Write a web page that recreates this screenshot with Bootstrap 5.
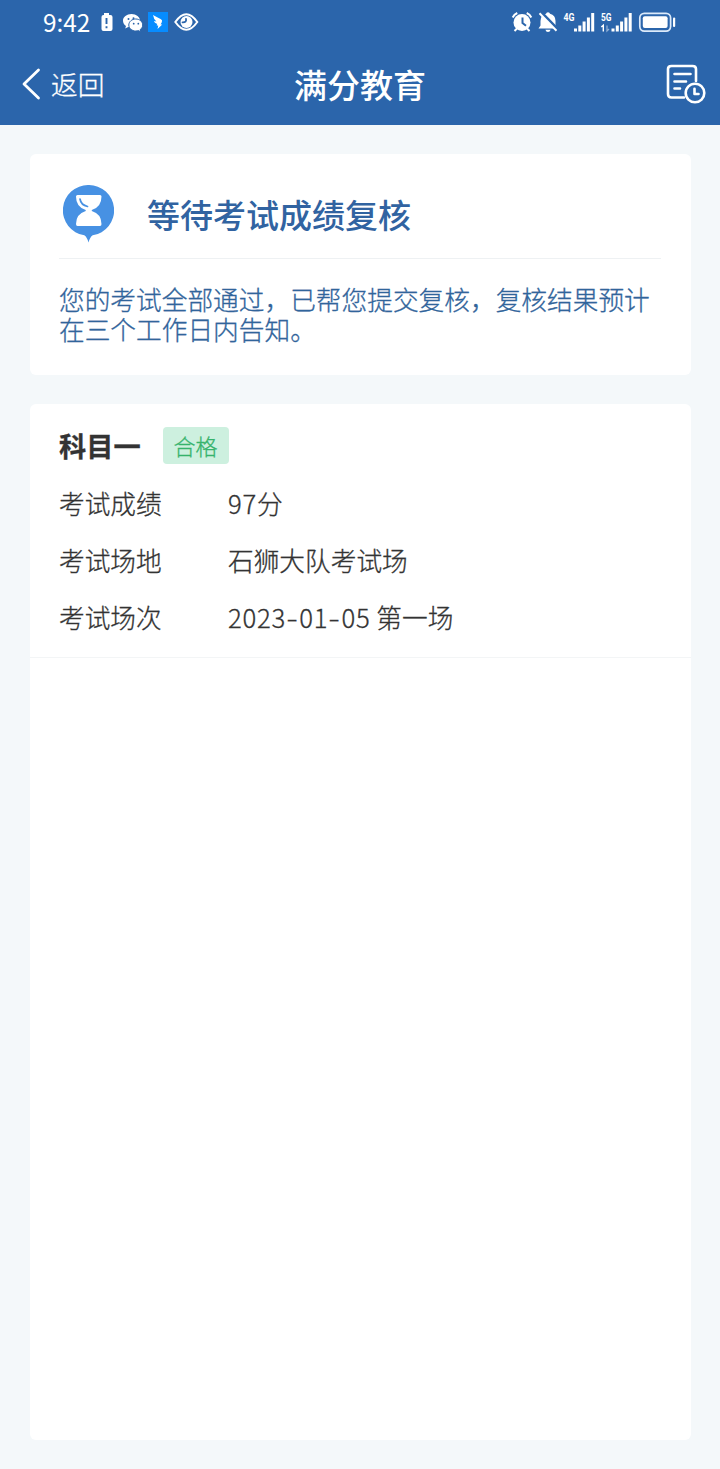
<!DOCTYPE html>
<html lang="zh-CN">
<head>
<meta charset="utf-8">
<meta name="viewport" content="width=device-width, initial-scale=1">
<title>满分教育</title>
<link href="https://cdn.jsdelivr.net/npm/bootstrap@5.3.0/dist/css/bootstrap.min.css" rel="stylesheet">
<style>
body{font-family:"Noto Sans CJK SC",sans-serif;background:#f4f8fa;color:#333;min-height:1469px;font-size:25.7px;line-height:30px;font-weight:300}
.top-area{background:#2b65ab;height:125px;color:#fff}
.status-row{height:44px;padding-left:43px;padding-right:44px}
.clock{font-size:24.4px;font-weight:400;width:55px;white-space:nowrap;line-height:28px;padding-bottom:1px}
.net-label{font:700 10px/10px "Roboto",sans-serif}
.title-row{height:80px;padding:0 14px 0 21px}
.title-row>*{flex:1 1 0}
.back-link{font-size:26.7px;gap:10px}
.page-title{font-size:33px;line-height:40px;font-weight:500;position:relative;left:-3.5px}
.thin-text{-webkit-text-stroke:.3px currentColor}
.panel{border:0;border-radius:6px;background:#fff}
main{padding:29px 29.5px;gap:29px}
.notice-panel{height:221px;padding:0 29.5px}
.notice-head{height:105px;border-bottom:1px solid #eef1f3;padding:16px 0 0 4px;gap:33px}
.notice-title{font-size:33px;line-height:40px;font-weight:500;color:#3163a1;padding-bottom:1px}
.notice-text{color:#31649b;padding-top:24.500px;white-space:nowrap}
.result-panel{height:1036px}
.subject{height:254px;padding:23px 29.5px 0;border-bottom:1px solid #f3f5f6}
.subject-head{margin-bottom:24px}
.subject-name{font-size:27.2px;font-weight:700}
.pass-tag{background:#cdf0df;color:#36b36c;font-size:22px;font-weight:300;border-radius:4px;width:66px;height:37px;padding:0 0 2px;margin-left:22px}
.info-row{height:57px}
.info-key{width:169px}
.num{letter-spacing:.75px}
.dash{display:inline-block;transform:scaleX(1.3);padding:0 2px}
</style>
</head>
<body>
<header class="top-area">
<div class="status-row d-flex align-items-center justify-content-between">
  <div class="d-flex align-items-center">
    <span class="clock">9:42</span>
    <svg width="102" height="30" viewBox="98 7 102 30" fill="#fff">
      <path d="M104 13h5v2h1.500q2 0 2 2v12q0 2-2 2h-7q-2 0-2-2v-12q0-2 2-2h.5z"/>
      <path d="M106.500 18v6M106.500 26.200v2" stroke="#2b65ab" stroke-width="1.900"/>
      <path d="M131.500 14c-4.800 0-8.500 3-8.500 6.700 0 2.200 1.200 4 3 5.200l-.8 2.600 3-1.500c1 .3 2 .4 3.200.4 4.900 0 8.600-3 8.600-6.700S136.300 14 131.500 14z"/>
      <path d="M135.800 19c-3.900 0-7 2.700-7 6s3.100 6 7 6c1 0 1.800-.1 2.600-.4l2.500 1.200-.7-2.200c1.500-1.100 2.500-2.700 2.500-4.600 0-3.300-3.100-6-6.900-6z" stroke="#2b65ab" stroke-width="1"/>
      <g fill="#2b65ab"><circle cx="128.500" cy="19" r="1"/><circle cx="133.500" cy="18.300" r="1"/><circle cx="133.700" cy="23.700" r=".9"/><circle cx="138.300" cy="23.700" r=".9"/></g>
      <path fill="#078cff" d="M148 12h20v20h-20z"/>
      <path d="M153 15q4 2.200 8 4.300 1.700 1 .8 3l-1.200 2.200h1.700l-4.800 4.500.8-3.300-1.700-.4.700-1.200q-3-.9-3.400-3.100l2.500.5q-2.600-2-3.400-6.500z"/>
      <path d="M175.300 22q11-15.500 22 0-11 15.500-22 0z" fill="none" stroke="#fff" stroke-width="2"/>
      <circle cx="186.500" cy="22" r="6"/><path d="M186 19q.8 3.500-3.500 3.300" fill="none" stroke="#2b65ab" stroke-width="1.800" stroke-linecap="round"/>
    </svg>
  </div>
  <svg width="166" height="30" viewBox="510 7 166 30" fill="#fff">
    <circle cx="522" cy="22.500" r="8.500"/>
    <path d="M512.700 17.500q1.400-3.200 4.600-4.500M531.300 17.500q-1.400-3.200-4.600-4.500M517 28.500l-2.500 2.500M527 28.500l2.500 2.500" fill="none" stroke="#fff" stroke-width="2"/>
    <path d="M522.500 17.500v5.500l3.500 2.700" fill="none" stroke="#2b65ab" stroke-width="2"/>
    <path d="M546 13.800q.3-1.600 2-1.600t2 1.600q5.500 1.400 5.500 7.200v4.500l2 3h-19l2-3v-4.500q0-5.800 5.500-7.200zM545.400 29.700h5.200q-.6 2.300-2.600 2.300t-2.600-2.300z"/>
    <path d="M541 12.500l17 17.500" stroke="#2b65ab" stroke-width="3.500"/><path d="M539.500 13.300l17 17.500" stroke="#fff" stroke-width="2"/>
    <text class="net-label" x="563.500" y="20.500" textLength="11" lengthAdjust="spacingAndGlyphs">4G</text>
    <path id="bars" d="M574 28.500h3v3h-3zM578.300 25.500h3v6h-3zM582.600 21.500h3v10h-3zM586.900 17.500h3v14h-3zM591.200 13h3v18.500h-3z"/>
    <text class="net-label" x="601" y="20.500" textLength="10.500" lengthAdjust="spacingAndGlyphs">5G</text>
    <path d="M601.300 27l2-1.800v6.300" fill="none" stroke="#fff" stroke-width="1.400"/><path d="M607 25.500v5.500l2-2" fill="none" stroke="#91b0d5" stroke-width="1.300"/>
    <use href="#bars" x="37.500"/>
    <rect x="639.800" y="13.300" width="30.800" height="17.800" rx="4.500" fill="none" stroke="#dceafa" stroke-width="1.700"/>
    <rect x="642.800" y="16.300" width="24.800" height="11.800" rx="2"/>
    <rect x="673" y="17.500" width="2.200" height="9.500" rx="1"/>
  </svg>
</div>
<nav class="title-row d-flex align-items-center">
  <a class="back-link thin-text d-flex align-items-center text-white text-decoration-none" href="#">
    <svg width="20" height="32" viewBox="0 0 20 32" fill="none" stroke="#fff" stroke-width="2.800" stroke-linecap="round" stroke-linejoin="round"><path d="M17.500 2L3 16l14.500 14"/></svg>
    <span>返回</span>
  </a>
  <h1 class="page-title text-center m-0">满分教育</h1>
  <div class="text-end">
    <svg width="40" height="40" viewBox="666 64 40 40" fill="none" stroke="#fff" stroke-width="2.600" stroke-linecap="round" stroke-linejoin="round">
      <path d="M684 97.500h-12.500q-3.500 0-3.500-3.500v-25q0-3 3.500-3h21q3.500 0 3.500 3v12M674.500 74h16M674.500 81.500h11.500M674.500 88.500h5.500"/>
      <circle cx="695" cy="93" r="9.300"/><path d="M694.500 88.800v5.200h4"/>
    </svg>
  </div>
</nav>
</header>
<main class="d-flex flex-column">
  <section class="card panel notice-panel">
    <div class="notice-head d-flex align-items-center">
      <svg width="51" height="58" viewBox="0 0 51 58">
        <path fill="#4791e3" d="M25.500 0a25.300 25.300 0 0 1 4.200 50.300Q27 52 25.500 57.500 24 52 21.300 50.300A25.300 25.300 0 0 1 25.500 0z"/>
        <path fill="#fff" d="M14.500 10h22.500q1.500 0 1.500 1.500 0 10.500-9.700 13.500v1q9.700 3 9.700 13 0 2-1.500 2h-22.500q-1.500 0-1.500-2 0-10 9.700-13v-1q-9.700-3-9.700-13.500 0-1.500 1.500-1.500z"/>
        <path d="M17 14q1 6 7.500 7.500" fill="none" stroke="#4791e3" stroke-width="1.700" stroke-linecap="round"/>
      </svg>
      <h2 class="notice-title m-0">等待考试成绩复核</h2>
    </div>
    <p class="notice-text thin-text m-0">您的考试全部通过，已帮您提交复核，复核结果预计<br>在三个工作日内告知。</p>
  </section>
  <section class="card panel result-panel">
    <div class="subject thin-text">
      <div class="subject-head d-flex align-items-center">
        <h3 class="subject-name m-0">科目一</h3>
        <span class="badge pass-tag d-flex align-items-center justify-content-center">合格</span>
      </div>
      <div class="info-row d-flex"><div class="info-key">考试成绩</div><div><span class="num">97</span>分</div></div>
      <div class="info-row d-flex"><div class="info-key">考试场地</div><div>石狮大队考试场</div></div>
      <div class="info-row d-flex"><div class="info-key">考试场次</div><div><span class="num">2023<span class="dash">-</span>01<span class="dash">-</span>05</span> 第一场</div></div>
    </div>
  </section>
</main>
<script src="https://cdn.jsdelivr.net/npm/bootstrap@5.3.0/dist/js/bootstrap.bundle.min.js"></script>
</body>
</html>
